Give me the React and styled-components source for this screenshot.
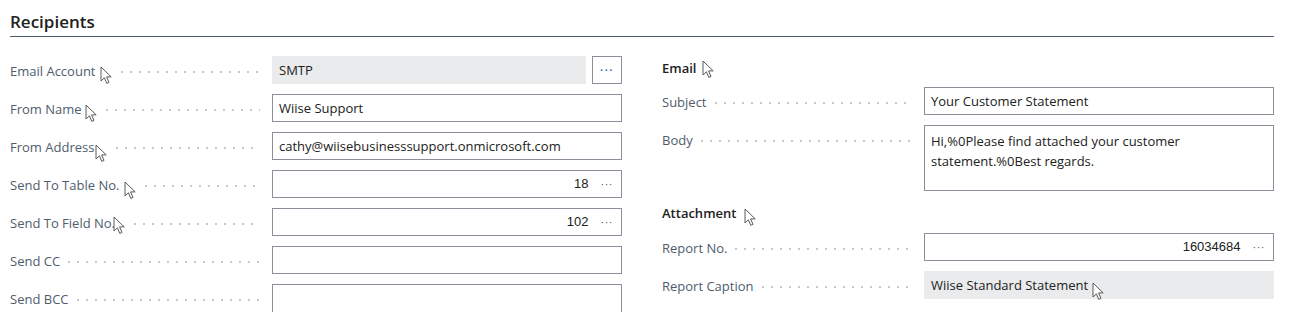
import React from 'react'
import styled, { createGlobalStyle } from 'styled-components'

const GlobalStyle = createGlobalStyle`
  body {
    margin: 0;
    background: #ffffff;
    font-family: "Segoe UI", "Open Sans", "Liberation Sans", sans-serif;
  }
`

const Page = styled.div`
  width: 1307px;
  height: 312px;
  overflow: hidden;
  box-sizing: border-box;
  padding: 0 33px 0 10px;
`

const SectionTitle = styled.h2`
  margin: 0;
  padding-top: 11px;
  height: 25px;
  font-size: 17px;
  line-height: 22px;
  font-weight: 600;
  color: #212121;
  border-bottom: 1px solid #505c6d;
`

const Columns = styled.div`
  display: grid;
  grid-template-columns: repeat(2, 1fr);
  column-gap: 40px;
  padding-top: 19px;
`

const Column = styled.div`
  display: flex;
  flex-direction: column;
  gap: 10px;
`

const GroupTitle = styled.div`
  height: 24px;
  line-height: 24px;
  font-size: 13px;
  font-weight: 600;
  color: #212121;
  margin-bottom: ${(p) => p.$after || 0}px;
  display: flex;
  align-items: center;
`

const Row = styled.div`
  display: grid;
  grid-template-columns: 262px 1fr;
  align-items: start;
`

const LabelCell = styled.div`
  height: 28px;
  display: flex;
  align-items: center;
  padding: 1px 12px 0 0;
  box-sizing: border-box;
  font-size: 13px;
  color: #505c6d;
  white-space: nowrap;
`

const Leader = styled.span`
  flex: 1;
  height: 2px;
  margin-left: 8px;
  margin-top: 2px;
  background-image: linear-gradient(to right, #c4c7cc 0 2px, transparent 2px);
  background-size: 9px 2px;
  background-repeat: repeat-x;
`

const ValueRow = styled.div`
  display: flex;
  gap: 6px;
`

const Input = styled.div`
  flex: 1;
  box-sizing: border-box;
  height: ${(p) => p.$height || 28}px;
  border: 1px solid ${(p) => (p.$readOnly ? '#eaebec' : '#8a9099')};
  background: ${(p) => (p.$readOnly ? '#eaebec' : '#ffffff')};
  padding: ${(p) => (p.$multi ? '5px 6px' : '0 6px')};
  display: flex;
  align-items: ${(p) => (p.$multi ? 'flex-start' : 'center')};
  justify-content: ${(p) => (p.$number ? 'flex-end' : 'flex-start')};
  font-size: 13px;
  line-height: 20px;
  color: #212121;
  white-space: ${(p) => (p.$multi ? 'normal' : 'nowrap')};
`

const Number = styled.span`
  font-family: "Liberation Sans", Arial, sans-serif;
  font-size: 13px;
`

const Ellipsis = styled.span`
  font-family: "Liberation Sans", Arial, sans-serif;
  font-size: 11px;
  letter-spacing: 0.5px;
  color: #505c6d;
  margin-left: 12px;
  margin-right: 2px;
`

const AssistButton = styled.button`
  box-sizing: border-box;
  width: 30px;
  height: 28px;
  padding: 0;
  border: 1px solid #8a9099;
  background: #ffffff;
  font-family: "Liberation Sans", Arial, sans-serif;
  font-size: 11px;
  font-weight: 700;
  letter-spacing: 1px;
  color: #3a6fb0;
`

const CursorMark = styled.svg`
  flex: none;
  width: 13px;
  height: 19px;
  margin-left: ${(p) => p.$dx || 0}px;
  transform: translateY(${(p) => p.$dy || 0}px);
`

function Cursor({ dx, dy }) {
  return (
    <CursorMark $dx={dx} $dy={dy} viewBox="0 0 13 19">
      <path
        d="M1 1 L1 15 L4.4 11.8 L6.8 17.4 L9 16.4 L6.6 10.9 L11.2 10.9 Z"
        fill="#ffffff"
        stroke="#5a5a5a"
        strokeWidth="1"
        strokeLinejoin="round"
      />
    </CursorMark>
  )
}

function Label({ children, cursor }) {
  return (
    <LabelCell>
      {children}
      {cursor && <Cursor dx={cursor[0]} dy={cursor[1]} />}
      <Leader />
    </LabelCell>
  )
}

export default function App() {
  return (
    <Page>
      <GlobalStyle />
      <SectionTitle>Recipients</SectionTitle>
      <Columns>
        <Column>
          <Row>
            <Label cursor={[4, 5]}>Email Account</Label>
            <ValueRow>
              <Input $readOnly>SMTP</Input>
              <AssistButton>···</AssistButton>
            </ValueRow>
          </Row>
          <Row>
            <Label cursor={[3, 5]}>From Name</Label>
            <Input>Wiise Support</Input>
          </Row>
          <Row>
            <Label cursor={[1, 7]}>From Address</Label>
            <Input>cathy@wiisebusinesssupport.onmicrosoft.com</Input>
          </Row>
          <Row>
            <Label cursor={[5, 6]}>Send To Table No.</Label>
            <Input $number>
              <Number>18</Number>
              <Ellipsis>···</Ellipsis>
            </Input>
          </Row>
          <Row>
            <Label cursor={[-2, 3]}>Send To Field No.</Label>
            <Input $number>
              <Number>102</Number>
              <Ellipsis>···</Ellipsis>
            </Input>
          </Row>
          <Row>
            <Label>Send CC</Label>
            <Input />
          </Row>
          <Row>
            <Label>Send BCC</Label>
            <Input $height={40} />
          </Row>
        </Column>

        <Column>
          <GroupTitle $after={-3}>
            Email
            <Cursor dx={6} dy={1} />
          </GroupTitle>
          <Row>
            <Label>Subject</Label>
            <Input>Your Customer Statement</Input>
          </Row>
          <Row>
            <Label>Body</Label>
            <Input $multi $height={66}>
              Hi,%0Please find attached your customer statement.%0Best regards.
            </Input>
          </Row>
          <GroupTitle $after={-2}>
            Attachment
            <Cursor dx={8} dy={4} />
          </GroupTitle>
          <Row>
            <Label>Report No.</Label>
            <Input $number>
              <Number>16034684</Number>
              <Ellipsis>···</Ellipsis>
            </Input>
          </Row>
          <Row>
            <Label>Report Caption</Label>
            <Input $readOnly>
              Wiise Standard Statement
              <Cursor dx={4} dy={6} />
            </Input>
          </Row>
        </Column>
      </Columns>
    </Page>
  )
}
